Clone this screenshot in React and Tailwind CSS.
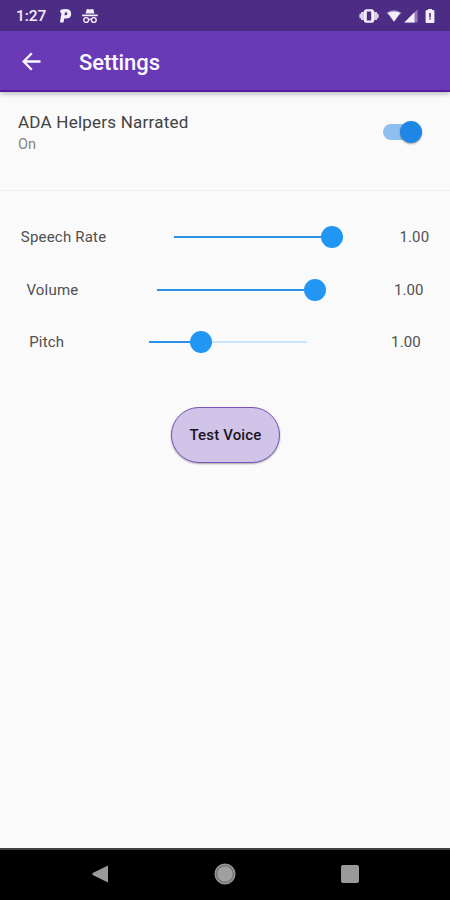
import React from "react";

const sliders = [
  { label: "Speech Rate", value: 1, max: 1 },
  { label: "Volume", value: 1, max: 1 },
  { label: "Pitch", value: 0.33, max: 1 },
];

function StatusBar() {
  return (
    <div className="flex h-[31px] items-center bg-[#4d2c85] pt-px pl-4 text-[#f3eefa]">
      <span className="w-[43px] pt-[2px] text-[15.5px] leading-none font-medium tracking-[-0.1px]">1:27</span>
      <svg className="h-4 w-[13px]" viewBox="0 0 13 16" fill="currentColor">
        <path fillRule="evenodd" d="M1.6 2.1Q3 1 6.6 1Q12.2 1 12.2 5.7Q12.2 10.6 7 10.6H5.6Q5.2 10.6 5.1 11.1L4.8 13.4Q4.6 14.6 3.4 14.6H1.6Q.8 14.6 1 13.8L2.4 5.2Q1.2 4.8 1.1 3.2Q1.1 2.4 1.6 2.1ZM6 4.2 5.5 7.3H6.6Q8.4 7.2 8.4 5.6Q8.3 4.2 6.6 4.2Z" />
      </svg>
      <svg className="ml-[9px] h-4 w-[18px]" viewBox="0 0 18 16" fill="none" stroke="currentColor">
        <path d="M4.6 5.6 5.6 1.4Q5.8.8 6.4.9L9 1.5 11.6.9Q12.2.8 12.4 1.4L13.4 5.6Z" fill="currentColor" stroke="none" />
        <path d="M1.2 7.4H16.8" strokeWidth="1.7" />
        <circle cx="5.2" cy="12" r="2.4" strokeWidth="1.4" />
        <circle cx="12.8" cy="12" r="2.4" strokeWidth="1.4" />
        <path d="M7.5 11.7Q9 10.7 10.5 11.7" strokeWidth="1.2" />
      </svg>
      <svg className="ml-auto h-4 w-5" viewBox="0 0 20 16" fill="currentColor">
        <path d="M.4 5.8H2V10.2H.4ZM2 4H4.9V12H2ZM15.1 4H18V12H15.1ZM18 5.8H19.6V10.2H18Z" opacity=".85" />
        <path fillRule="evenodd" d="M6.8 1.3H13.2Q15.2 2 15.2 3.6V12.4Q15.2 14 13.2 14.7H6.8Q4.8 14 4.8 12.4V3.6Q4.8 2 6.8 1.3ZM7.8 3.6V12.4H12.2V3.6Z" />
      </svg>
      <svg className="ml-[7px] h-[14px] w-4" viewBox="0 0 16 14" fill="currentColor">
        <path d="M.4 3.8Q8-1.8 15.6 3.8L14.3 5.3H1.7Z" opacity=".4" />
        <path d="M1.6 3.9Q8 1 14.4 3.9L8 12.7Z" />
      </svg>
      <svg className="ml-[2px] h-[14px] w-[14px]" viewBox="0 0 14 14" fill="currentColor">
        <path d="M13.6.2V13.5H.3Z" opacity=".4" />
        <path d="M10.5 3.3V13.5H.3Z" />
      </svg>
      <svg className="mr-[15px] ml-[7px] h-4 w-[10px]" viewBox="0 0 10 16" fill="currentColor">
        <path fillRule="evenodd" d="M3 1H7V2H8.4Q9.4 2 9.4 3V14Q9.4 15 8.4 15H1.6Q.6 15 .6 14V3Q.6 2 1.6 2H3ZM4.2 5V9.4H5.8V5ZM4.2 10.2V11.4H5.8V10.2Z" />
      </svg>
    </div>
  );
}

function AppBar() {
  return (
    <header className="relative flex h-[61px] items-center border-b-2 border-[#571aa3] bg-[#6a3ab6] pl-[22px] text-[#fbf8ff] shadow-[0_2px_5px_rgba(0,0,0,0.25)]">
      <svg className="mt-[2px] h-[19px] w-[19px]" viewBox="0 0 19 19" fill="none" stroke="currentColor" strokeWidth="2.3">
        <path d="M18.5 9.5H2M9.8 1.2 1.6 9.5 9.8 17.8" />
      </svg>
      <h1 className="mt-[5px] ml-[38px] text-[22px] leading-none font-medium tracking-[-0.05px]">Settings</h1>
    </header>
  );
}

function Slider({ fraction }) {
  return (
    <div className="w-[210px] px-[26px]">
      <div className="flex h-[22px] items-center">
        <div className="h-[2px] bg-[#2b91ea]" style={{ width: `calc(${fraction * 100}% - 11px)` }} />
        <div className={`h-[22px] w-[22px] shrink-0 rounded-full bg-[#2196f3] ${fraction === 1 ? "-mr-[11px]" : ""}`} />
        {fraction < 1 && <div className="h-[2px] flex-1 bg-[#c9e4fb]" />}
      </div>
    </div>
  );
}

export default function App() {
  return (
    <div className="flex h-[900px] w-[450px] flex-col overflow-hidden bg-[#fafafa] font-['Roboto','Liberation_Sans',sans-serif]">
      <StatusBar />
      <AppBar />
      <main className="flex flex-1 flex-col">
        <section className="flex h-[99px] justify-between border-b border-[#efefef] pt-5 pr-[28px] pl-[18px]">
          <div>
            <div className="text-[17px] leading-5 tracking-[0.23px] text-[#424242]">ADA Helpers Narrated</div>
            <div className="mt-1 text-[14.5px] leading-[18px] text-[#858585]">On</div>
          </div>
          <div className="mt-[9px] flex h-[22px] w-[39px] items-center">
            <div className="flex h-4 w-full items-center justify-end rounded-full bg-[#8dc0ee]">
              <div className="h-[22px] w-[22px] shrink-0 rounded-full bg-[#1e86e5] shadow-[0_1px_2px_rgba(0,0,0,0.35)]" />
            </div>
          </div>
        </section>
        <section className="pt-5">
          {sliders.map(({ label, value, max }) => (
            <div key={label} className="flex h-[52.5px] items-center justify-around text-[15px] leading-5 text-[#505050]">
              <span className="tracking-[0.2px]">{label}</span>
              <Slider fraction={value / max} />
              <span className="tracking-[0.1px]">1.00</span>
            </div>
          ))}
        </section>
        <button className="mt-[38px] ml-px h-14 w-[109px] self-center rounded-full border border-[#7755b8] bg-[#d1c4e9] pt-[2px] text-[15px] font-medium tracking-[0.15px] text-[#19151f] shadow-[0_1px_2px_rgba(0,0,0,0.35)]">
          Test Voice
        </button>
      </main>
      <nav className="flex h-[52px] items-center justify-between border-t-2 border-[#444] bg-black pr-[91px] pb-[2px] pl-[92px] text-[#9a9a9a]">
        <svg className="h-[18px] w-4" viewBox="0 0 16 18" fill="currentColor">
          <path d="M16 .5V17.5L.7 10Q0 9 .7 8Z" />
        </svg>
        <svg className="h-[22px] w-[22px]" viewBox="0 0 22 22">
          <circle cx="11" cy="11" r="9.8" fill="#737373" stroke="#969696" strokeWidth="1.5" />
          <circle cx="11" cy="11" r="7.7" fill="#a0a0a0" />
        </svg>
        <div className="h-[18px] w-[18px] rounded-[2px] bg-[#9a9a9a]" />
      </nav>
    </div>
  );
}
